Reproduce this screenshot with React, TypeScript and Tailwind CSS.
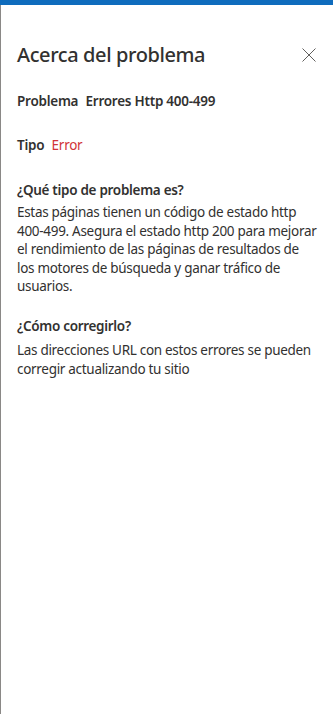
export default function App() {
    return (
        <div className="flex h-[714px] w-[333px] flex-col bg-white font-['Segoe_UI','Noto_Sans',sans-serif] text-[#323130]">
            <div className="h-[5px] shrink-0 bg-[#0f6cbd]"></div>
            <div className="flex flex-1 flex-col border-l border-[#8a8886] pl-[16px] pr-[16px]">
                {/* Header */}
                <div className="mt-[36px] flex items-center justify-between">
                    <h1 className="text-[20px] font-medium leading-[28px] tracking-[-0.4px]">Acerca del problema</h1>
                    <button className="mr-[1px] text-[#605e5c]" aria-label="Cerrar">
                        <svg width="14" height="14" viewBox="0 0 14 14" fill="none" stroke="currentColor" strokeWidth="1">
                            <path d="M0.5 0.5L13.5 13.5M13.5 0.5L0.5 13.5" />
                        </svg>
                    </button>
                </div>

                <div className="mt-[23px] text-[13.5px] font-semibold leading-[18.5px] tracking-[-0.25px]">
                    Problema <span className="ml-1">Errores Http 400-499</span>
                </div>

                <div className="mt-[25.5px] text-[13.5px] font-semibold leading-[18.5px] tracking-[-0.25px]">
                    Tipo <span className="ml-1 font-normal text-[#d13438]">Error</span>
                </div>

                <div className="mt-[26.5px] text-[13.5px] leading-[18.5px] tracking-[-0.3px]">
                    <h2 className="font-semibold">¿Qué tipo de problema es?</h2>
                    <p className="mt-[3.5px]">
                        Estas páginas tienen un código de estado http 400-499. Asegura el estado http 200 para mejorar el
                        rendimiento de las páginas de resultados de los motores de búsqueda y ganar tráfico de usuarios.
                    </p>
                </div>

                <div className="mt-[21.5px] text-[13.5px] leading-[18.5px] tracking-[-0.3px]">
                    <h2 className="font-semibold">¿Cómo corregirlo?</h2>
                    <p className="mt-[5.5px]">
                        Las direcciones URL con estos errores se pueden corregir actualizando tu sitio
                    </p>
                </div>
            </div>
        </div>
    )
}
